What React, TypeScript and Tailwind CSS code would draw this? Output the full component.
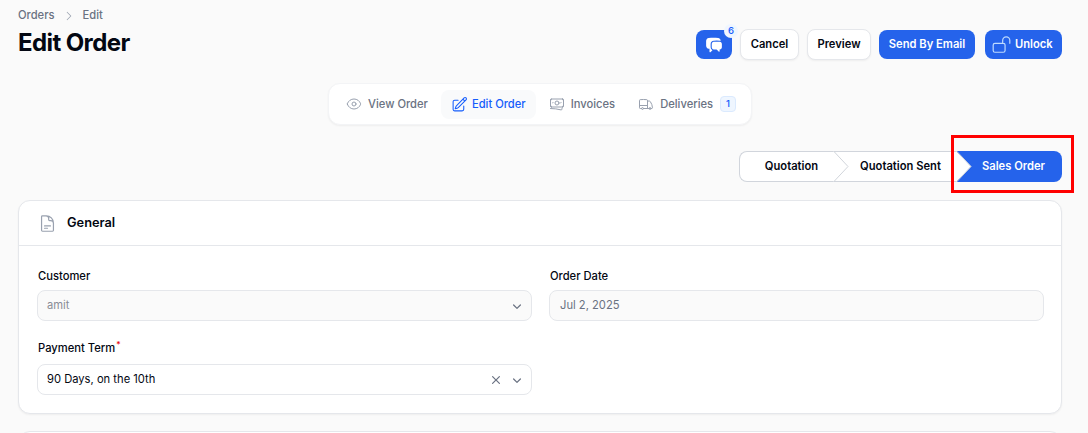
import {
  HiChatBubbleLeftRight,
  HiChevronRight,
  HiMiniChevronDown,
  HiMiniXMark,
  HiOutlineDocumentText,
  HiOutlineEye,
  HiOutlineLockOpen,
  HiOutlinePencilSquare,
  HiOutlineBanknotes,
  HiOutlineTruck,
} from "react-icons/hi2";

function StepArrow() {
  return (
    <svg
      className="absolute -right-[15px] -top-px z-10 h-[31px] w-[16px]"
      viewBox="0 0 16 31"
      fill="none"
    >
      <path d="M0 0 L15 15.5 L0 31 Z" fill="#ffffff" />
      <path d="M0.5 0 L15 15.5 L0.5 31" stroke="#d1d5db" strokeWidth="1" />
    </svg>
  );
}

const tabClass =
  "flex h-[29px] items-center gap-[6px] whitespace-nowrap rounded-lg px-2.5 text-[11.2px] font-medium text-gray-500";

export default function App() {
  return (
    <div className="h-[433px] overflow-hidden bg-[#fafafa] pl-[18px] pr-[26px] pt-[8px] font-['Inter',sans-serif]">
      <div className="flex items-start justify-between">
        <div>
          <div className="flex h-[15px] items-center text-[11.2px] font-medium text-gray-500">
            <span>Orders</span>
            <HiChevronRight className="mx-2 h-3 w-3 text-gray-400" />
            <span>Edit</span>
          </div>
          <h1 className="mt-[4px] text-2xl font-bold leading-[32px] tracking-[-0.6px] text-gray-950">
            Edit Order
          </h1>
        </div>
        <div className="mt-[21px] flex items-center text-[11.2px] font-semibold">
          <button className="relative flex h-[29px] w-[36px] items-center justify-center rounded-lg bg-[#2563eb] text-white">
            <HiChatBubbleLeftRight className="h-[18px] w-[18px]" />
            <span className="absolute -right-[6px] -top-[6px] flex h-3.5 w-3.5 items-center justify-center rounded-full bg-blue-50 text-[9.6px] font-medium text-blue-600">
              6
            </span>
          </button>
          <button className="ml-2 h-[31px] w-[59px] rounded-lg border border-gray-200 bg-white text-gray-950 shadow-xs">
            Cancel
          </button>
          <button className="ml-2 h-[31px] w-[64px] rounded-lg border border-gray-200 bg-white text-gray-950 shadow-xs">
            Preview
          </button>
          <button className="ml-2 h-[29px] w-[96px] rounded-lg bg-[#2563eb] text-white">
            Send By Email
          </button>
          <button className="ml-2.5 flex h-[29px] w-[77px] items-center gap-1 rounded-lg bg-[#2563eb] pl-[7px] text-white">
            <HiOutlineLockOpen className="h-[19px] w-[19px] text-blue-200" />
            Unlock
          </button>
        </div>
      </div>

      <div className="mt-[23px] flex justify-center">
        <nav className="flex h-[42px] w-[424px] items-center gap-[3px] rounded-xl border border-gray-100 bg-white px-[7px] shadow-xs">
          <a className={tabClass}>
            <HiOutlineEye className="h-4 w-4 text-gray-400" />
            View Order
          </a>
          <a className="flex h-[29px] items-center gap-[4px] whitespace-nowrap rounded-lg bg-gray-50 px-2.5 text-[11.2px] font-medium text-blue-600">
            <HiOutlinePencilSquare className="h-[17px] w-[17px]" />
            Edit Order
          </a>
          <a className={tabClass}>
            <HiOutlineBanknotes className="h-4 w-4 text-gray-400" />
            Invoices
          </a>
          <a className={tabClass}>
            <HiOutlineTruck className="h-4 w-4 text-gray-400" />
            Deliveries
            <span className="ml-px flex h-4 w-4 items-center justify-center rounded border border-blue-100 bg-blue-50 text-[9.6px] text-blue-600">
              1
            </span>
          </a>
        </nav>
      </div>

      <div className="mt-[26px] flex justify-end text-[11.2px] font-semibold">
        <div className="relative flex h-[31px] w-[95px] items-center justify-center rounded-l-lg border border-r-0 border-gray-300 bg-white pl-[9px] text-gray-950">
          Quotation
          <StepArrow />
        </div>
        <div className="relative flex h-[31px] w-[123px] items-center justify-center border-y border-gray-300 bg-white pl-[10px] text-gray-950">
          Quotation Sent
          <StepArrow />
        </div>
        <div className="flex h-[31px] w-[105px] items-center justify-center rounded-r-lg bg-[#2563eb] pl-[8px] text-white">
          Sales Order
        </div>
      </div>

      <section className="mt-[18px] h-[214px] rounded-xl border border-gray-200 bg-white shadow-xs">
        <div className="flex h-[45px] items-center gap-[10px] border-b border-gray-200 pl-[19px]">
          <HiOutlineDocumentText className="h-[19px] w-[19px] text-gray-400" />
          <h2 className="text-[12.8px] font-semibold text-gray-950">General</h2>
        </div>
        <div className="grid grid-cols-2 gap-x-[17px] pl-[18px] pr-[17px] pt-[22px]">
          <div>
            <label className="block pl-px text-[11.2px] font-medium leading-4 text-gray-950">
              Customer
            </label>
            <div className="mt-[6px] flex h-[31px] items-center justify-between rounded-lg border border-gray-200 bg-[#fafafa] pl-[9px] pr-[6px] text-[11.2px] text-[#8a8d96]">
              amit
              <HiMiniChevronDown className="h-4 w-4 text-gray-500" />
            </div>
          </div>
          <div>
            <label className="block pl-px text-[11.2px] font-medium leading-4 text-gray-950">
              Order Date
            </label>
            <div className="mt-[6px] flex h-[31px] items-center rounded-lg border border-gray-200 bg-[#fafafa] pl-[10px] text-[11.2px] text-gray-500">
              Jul 2, 2025
            </div>
          </div>
          <div className="mt-[19px]">
            <label className="block pl-px text-[11.2px] font-medium leading-4 text-gray-950">
              Payment Term
              <sup className="ml-px font-medium text-red-600">*</sup>
            </label>
            <div className="mt-[8px] flex h-[31px] items-center justify-between rounded-lg border border-gray-200 bg-white pl-[9px] pr-[6px] text-[11.2px] text-gray-950">
              90 Days, on the 10th
              <span className="flex items-center gap-[5px] text-gray-500">
                <HiMiniXMark className="h-4 w-4" />
                <HiMiniChevronDown className="h-4 w-4" />
              </span>
            </div>
          </div>
        </div>
      </section>

      <section className="mt-[17px] h-[40px] rounded-xl border border-gray-200 bg-white" />

      <div className="pointer-events-none absolute left-[951px] top-[135px] h-[58px] w-[123px] border-[3px] border-[#ff0000]" />
    </div>
  );
}
